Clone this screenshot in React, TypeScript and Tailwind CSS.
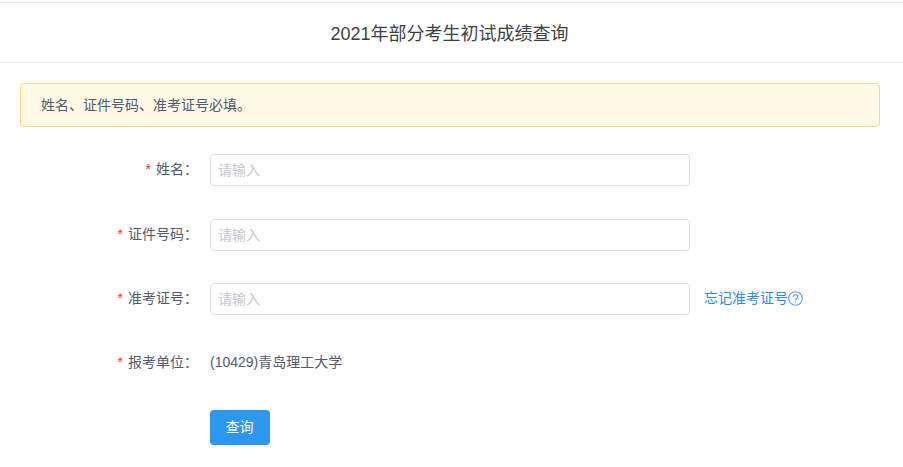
import React from 'react';

const FONT = "font-['Liberation_Sans','Noto_Sans_CJK_SC',sans-serif]";

const Label: React.FC<{ text: string; last?: boolean }> = ({ text, last }) => (
    <label className={`w-[190px] shrink-0 pr-[12px] text-right text-[14px] text-[#515a6e] ${last ? 'leading-[32px]' : 'leading-[30px]'}`}>
        <span className="mr-[5px] text-[14px] text-[#ed3a0c]">*</span>
        {text}：
    </label>
);

const TextInput: React.FC = () => (
    <input
        type="text"
        placeholder="请输入"
        className="h-[32px] w-[480px] rounded-[4px] border border-[#dcdee2] bg-white px-[7px] text-[14px] outline-none placeholder:text-[#c5c8ce]"
    />
);

const HelpIcon: React.FC = () => (
    <svg width="15" height="15" viewBox="0 0 15 15" fill="none" stroke="#5a9ff2" strokeWidth="1.1">
        <circle cx="7.5" cy="7.5" r="6.8" />
        <path d="M5.2 5.9c0-1.3 1-2.2 2.3-2.2s2.3.9 2.3 2.1c0 1.7-2.3 1.6-2.3 3.4" />
        <path d="M7.5 10.3v1.3" />
    </svg>
);

const App: React.FC = () => {
    return (
        <div className={`h-[467px] w-[903px] overflow-hidden bg-white pt-[2px] ${FONT}`}>
            <div className="flex h-[61px] items-center justify-center border-y border-[#e8eaec] pr-[4px] pt-[3px] text-[18px] text-[#3c3f47]">
                2021年部分考生初试成绩查询
            </div>
            <div className="px-[20px] pt-[20px]">
                <div className="flex h-[44px] w-[860px] items-center rounded-[4px] border border-[#ffd77a] bg-[#fff9e6] pl-[20px] text-[14px] text-[#515a6e]">
                    姓名、证件号码、准考证号必填。
                </div>
                <form className="pt-[27px]">
                    <div className="mb-[33px] flex">
                        <Label text="姓名" />
                        <TextInput />
                    </div>
                    <div className="mb-[32px] flex">
                        <Label text="证件号码" />
                        <TextInput />
                    </div>
                    <div className="mb-[31px] flex">
                        <Label text="准考证号" />
                        <TextInput />
                        <a className="ml-[14px] flex h-[30px] items-center text-[14px] text-[#2d8cf0]">
                            忘记准考证号
                            <HelpIcon />
                        </a>
                    </div>
                    <div className="mb-[32px] flex">
                        <Label text="报考单位" last />
                        <span className="text-[14px] leading-[32px] text-[#515a6e]">(10429)青岛理工大学</span>
                    </div>
                    <div className="pl-[190px]">
                        <button type="button" className="h-[35px] w-[60px] rounded-[4px] bg-[#2d96ee] pr-[1px] text-[14px] text-white">
                            查询
                        </button>
                    </div>
                </form>
            </div>
        </div>
    );
};

export default App;
